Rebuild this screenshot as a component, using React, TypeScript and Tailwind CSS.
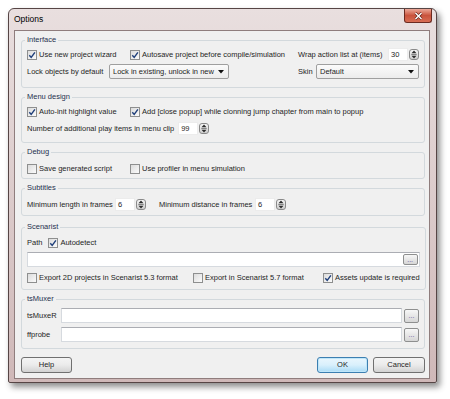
import type { ReactNode } from 'react';

const CheckMark = () => (
  <svg width="8" height="8" viewBox="0 0 8 8">
    <path d="M1.3 4.2 L3.2 6.4 L6.9 1.3" fill="none" stroke="#1f3f7a" strokeWidth="1.4" />
  </svg>
);

type CheckProps = {
  label: string;
  checked?: boolean;
  className?: string;
};

const Check = ({ label, checked, className = '' }: CheckProps) => (
  <label className={`flex items-center shrink-0 ${className}`}>
    <span className="flex h-[10px] w-[10px] items-center justify-center border border-[#8e8f8f] bg-gradient-to-br from-[#dcdcdc] to-[#fbfbfb]">
      {checked && <CheckMark />}
    </span>
    <span className="ml-[2px] whitespace-nowrap">{label}</span>
  </label>
);

const Spinner = () => (
  <span className="flex h-[11px] w-[10px] items-center justify-center rounded-[3px] border border-[#8a8a8a] bg-gradient-to-b from-[#f6f6f6] to-[#cfcfcf]">
    <svg width="6" height="9" viewBox="0 0 6 9">
      <path d="M3 0.5 L5.5 3.3 L0.5 3.3 Z" fill="#2b2b2b" />
      <path d="M0.3 4.5 H5.7" stroke="#6b6b6b" strokeWidth="0.8" />
      <path d="M3 8.5 L5.5 5.7 L0.5 5.7 Z" fill="#2b2b2b" />
    </svg>
  </span>
);

const Spin = ({ value, className = '' }: { value: string; className?: string }) => (
  <div className={`flex items-center ${className}`}>
    <span className="flex h-[13px] w-[20px] items-center border border-[#ececec] bg-white pl-[2px]">
      {value}
    </span>
    <span className="ml-[1px]">
      <Spinner />
    </span>
  </div>
);

const Select = ({ value, className = '' }: { value: string; className?: string }) => (
  <div
    className={`flex h-[15px] items-center rounded-[2px] border border-[#9f9f9f] bg-gradient-to-b from-[#fbfbfb] to-[#ececec] pl-[3px] pr-[4px] ${className}`}
  >
    <span className="flex-1 whitespace-nowrap">{value}</span>
    <svg width="6" height="4" viewBox="0 0 6 4">
      <path d="M0 0 H6 L3 3.5 Z" fill="#111" />
    </svg>
  </div>
);

const Dots = ({ className = '' }: { className?: string }) => (
  <span
    className={`flex w-[15px] items-center justify-center rounded-[2px] border border-[#8e8f8f] bg-gradient-to-b from-[#f7f7f7] to-[#d6d6d6] text-[7px] leading-none text-[#5a4f9a] ${className}`}
  >
    ...
  </span>
);

const TextBox = ({ children, className = '' }: { children?: ReactNode; className?: string }) => (
  <div
    className={`flex h-[15px] items-center border border-[#d6dadf] border-t-[#abadb3] bg-white ${className}`}
  >
    {children}
  </div>
);

const Group = ({
  title,
  className = '',
  children,
}: {
  title: string;
  className?: string;
  children: ReactNode;
}) => (
  <fieldset className={`rounded-[3px] border border-[#d3d9dd] px-[5px] ${className}`}>
    <legend className="ml-[-2px] px-[2px] leading-[10px] text-[#26304f]">{title}</legend>
    {children}
  </fieldset>
);

const Row = ({ children, className = '' }: { children: ReactNode; className?: string }) => (
  <div className={`flex h-[15px] items-center ${className}`}>{children}</div>
);

const PushButton = ({
  label,
  primary,
  className = '',
}: {
  label: string;
  primary?: boolean;
  className?: string;
}) => (
  <button
    type="button"
    className={`flex h-[16px] items-center justify-center rounded-[3px] border ${
      primary
        ? 'border-[#3c7fb1] bg-gradient-to-b from-[#eaf6fd] via-[#d9f0fc] to-[#a9dbf6] shadow-[inset_0_0_0_1px_#bfe6f9]'
        : 'border-[#707070] bg-gradient-to-b from-[#f4f4f4] via-[#ebebeb] to-[#d2d2d2]'
    } ${className}`}
  >
    {label}
  </button>
);

export default function App() {
  return (
    <div className="h-[399px] w-[450px] bg-white pl-[8px] pt-[8px] font-['Liberation_Sans',Arial,sans-serif] text-[7.5px] leading-[10px] text-[#1e1e1e]">
      <div className="flex h-[375px] w-[429px] flex-col rounded-t-[6px] rounded-b-[2px] border border-[#564545] bg-gradient-to-b from-[#e9dfdf] to-[#cfb8b8] shadow-[3px_4px_6px_rgba(0,0,0,0.45)]">
        {/* Title bar */}
        <div className="flex h-[21px] items-start pl-[5px]">
          <span className="mt-[5px] text-[8.5px] leading-[10px] text-black">Options</span>
          <span className="ml-auto mr-[4px] flex h-[14px] w-[28px] items-center justify-center rounded-b-[3px] border border-t-0 border-[#6b2a20] bg-gradient-to-b from-[#eba99a] via-[#c9533d] to-[#d86d54]">
            <svg width="9" height="8" viewBox="0 0 9 8">
              <path d="M1.5 1 L7.5 7 M7.5 1 L1.5 7" stroke="#5a1a12" strokeWidth="2.6" />
              <path d="M1.5 1 L7.5 7 M7.5 1 L1.5 7" stroke="#ffffff" strokeWidth="1.5" />
            </svg>
          </span>
        </div>

        {/* Client area */}
        <div className="mx-[5px] flex h-[349px] w-[416px] flex-col border border-[#8f7d7d] bg-[#f0f0f0] pl-[6px] pr-[4px] pt-[4px]">
          <Group title="Interface" className="pb-[8px] pt-[2px]">
            <div className="flex flex-col gap-[2px]">
              <Row>
                <Check checked label="Use new project wizard" className="w-[103px]" />
                <Check checked label="Autosave project before compile/simulation" className="w-[168px]" />
                <span className="whitespace-nowrap">Wrap action list at (items)</span>
                <Spin value="30" className="ml-auto" />
              </Row>
              <Row>
                <span className="w-[82px] whitespace-nowrap">Lock objects by default</span>
                <Select value="Lock in existing, unlock in new" className="w-[120px]" />
                <span className="ml-[69px] w-[18px]">Skin</span>
                <Select value="Default" className="flex-1" />
              </Row>
            </div>
          </Group>

          <Group title="Menu design" className="mt-[4px] pb-[6px] pt-[2px]">
            <div className="flex flex-col gap-[2px]">
              <Row>
                <Check checked label="Auto-init highlight value" className="w-[103px]" />
                <Check checked label="Add [close popup] while clonning jump chapter from main to popup" />
              </Row>
              <Row>
                <span className="whitespace-nowrap">Number of additional play items in menu clip</span>
                <Spin value="99" className="ml-[4px]" />
              </Row>
            </div>
          </Group>

          <Group title="Debug" className="mt-[4px] pb-[2px] pt-[4px]">
            <Row>
              <Check label="Save generated script" className="w-[103px]" />
              <Check label="Use profiler in menu simulation" />
            </Row>
          </Group>

          <Group title="Subtitles" className="mt-[4px] pb-[3px] pt-[4px]">
            <Row>
              <span className="w-[88px] whitespace-nowrap">Minimum length in frames</span>
              <Spin value="6" />
              <span className="ml-[13px] w-[96px] whitespace-nowrap">Minimum distance in frames</span>
              <Spin value="6" />
            </Row>
          </Group>

          <Group title="Scenarist" className="mt-[6px] pb-[4px] pt-[3px]">
            <Row>
              <span>Path</span>
              <Check checked label="Autodetect" className="ml-[6px]" />
            </Row>
            <TextBox className="mt-[2px] justify-end">
              <Dots className="mr-[1px] h-[11px]" />
            </TextBox>
            <Row className="mt-[3px]">
              <Check label="Export 2D projects in Scenarist 5.3 format" className="w-[166px]" />
              <Check label="Export in Scenarist 5.7 format" className="w-[130px]" />
              <Check checked label="Assets update is required" />
            </Row>
          </Group>

          <Group title="tsMuxer" className="mt-[4px] pb-[6px] pt-[4px]">
            <div className="flex flex-col gap-[4px]">
              <Row>
                <span className="w-[34px]">tsMuxeR</span>
                <TextBox className="flex-1" />
                <Dots className="ml-[2px] h-[14px]" />
              </Row>
              <Row>
                <span className="w-[34px]">ffprobe</span>
                <TextBox className="flex-1" />
                <Dots className="ml-[2px] h-[14px]" />
              </Row>
            </div>
          </Group>

          <div className="mt-[8px] flex items-center justify-between">
            <PushButton label="Help" className="w-[51px]" />
            <div className="flex gap-[5px]">
              <PushButton label="OK" primary className="w-[51px]" />
              <PushButton label="Cancel" className="w-[52px]" />
            </div>
          </div>
        </div>
      </div>
    </div>
  );
}
